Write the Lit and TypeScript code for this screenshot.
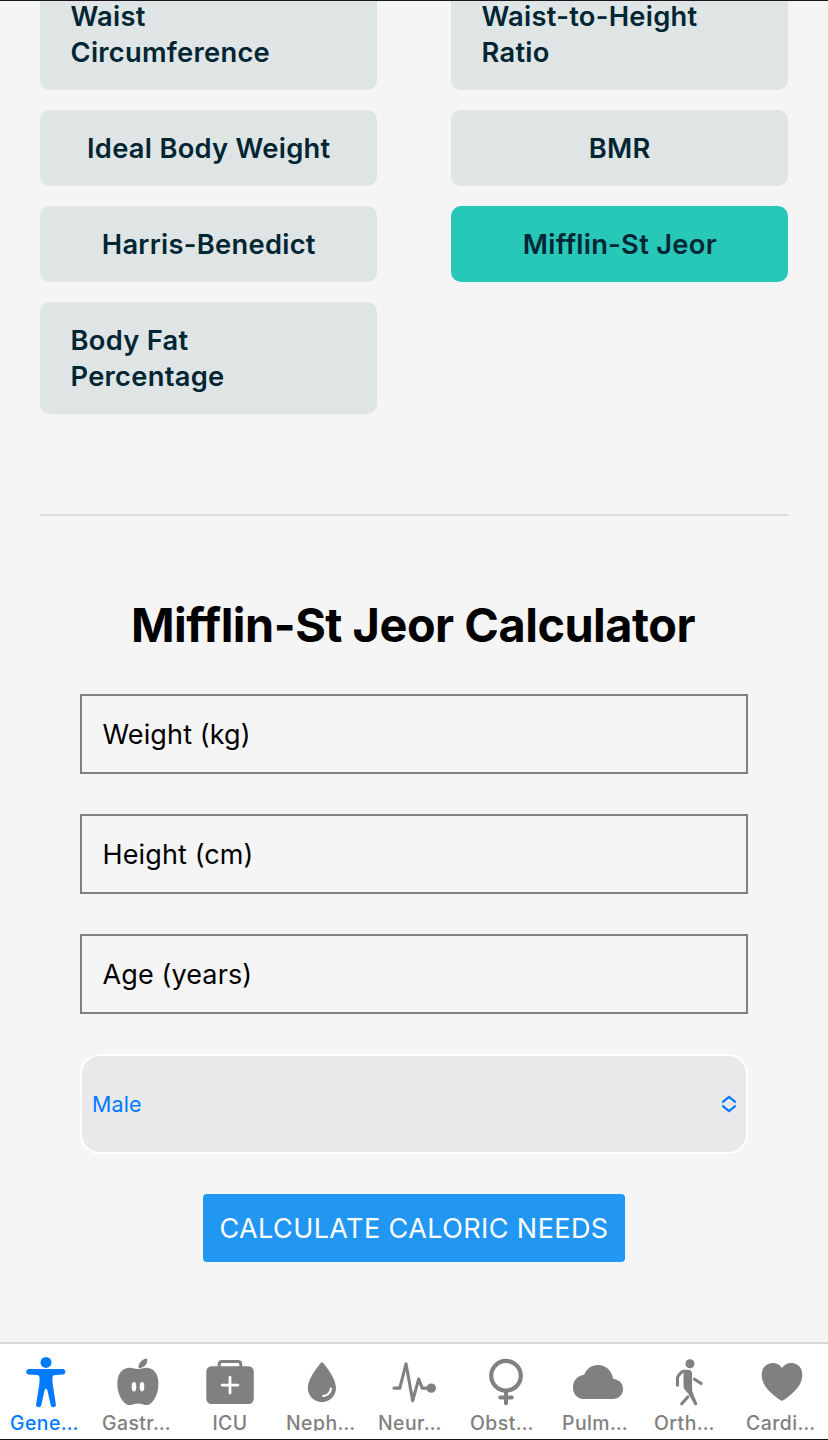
import { LitElement, html, css, svg } from "lit";
import { customElement, property } from "lit/decorators.js";
import { classMap } from "lit/directives/class-map.js";

const ICONS: Record<string, unknown> = {
  body: svg`<circle cx="30" cy="7.4" r="5.5"/><path d="M12.4 13.9H47.2A2.8 2.8 0 0 1 47.2 19.4L39 20Q36.3 20.3 36.4 23.5L36.7 29L39.8 48.9A2.6 2.6 0 0 1 34.7 50.2L31.6 36Q30 31 28.4 36L25.3 50.2A2.6 2.6 0 0 1 20.2 48.9L23.3 29L23.6 23.5Q23.7 20.3 21 20L12.4 19.4A2.8 2.8 0 0 1 12.4 13.9Z"/>`,
  apple: svg`<path fill-rule="evenodd" d="M30 14.1C26.5 14.1 25 12.7 21.3 12.8C13 13.1 9.3 20.5 9.3 28.8C9.3 36.5 12 43 16 47.3C18.8 50.3 21.8 50.6 24.7 49.5C28.7 48.1 31.3 48.1 35.3 49.5C38.2 50.6 41.2 50.3 44 47.3C48 43 50.4 36.5 50.4 28.8C50.4 20.5 47 13.1 38.7 12.8C35 12.7 33.5 14.1 30 14.1ZM26 27A2.3 4.7 0 0 0 26 36.4A2.3 4.7 0 0 0 26 27ZM34 27A2.3 4.7 0 0 0 34 36.4A2.3 4.7 0 0 0 34 27Z"/><path d="M39.2 3.6C40.2 8.5 36 13.4 30.6 13.3C29.7 8.7 34 3.9 39.2 3.6Z"/>`,
  medkit: svg`<rect x="6.3" y="11.2" width="47.5" height="37.8" rx="5.2"/><path class="line" stroke-width="3" d="M19.2 12V9.5Q19.2 6.6 22.1 6.6H37.9Q40.8 6.6 40.8 9.5V12"/><path class="cut" stroke-width="2.8" d="M30 22.2V38M22.1 30.1H37.9"/>`,
  drop: svg`<path d="M28.7 8.1Q30 6.3 31.3 8.1C36 14.3 44 24.5 44 33.1A14.1 14.1 0 0 1 15.8 33.1C15.8 24.5 24 14.3 28.7 8.1Z"/><path class="cut" stroke-width="2.1" d="M38.9 33.6A8 8 0 0 1 31.2 41"/>`,
  pulse: svg`<path class="line" stroke-width="3.1" d="M10 33.1H15.8L22 8.8L28.7 45.7L34.7 24L38.2 33.1H46"/><circle cx="47.3" cy="33.1" r="4.7"/>`,
  female: svg`<circle class="line" cx="30" cy="20.7" r="14.8" stroke-width="4.2"/><path class="line" stroke-width="4" d="M30 36V48.2M24.3 42.5H35.8"/>`,
  cloud: svg`<path d="M16.7 44C9.6 44 5 39.3 5 32.4C5 25.5 9.2 20.8 16.2 19.7C18.6 13.6 23.5 10 30 10C37.8 10 43.7 15.3 45.2 24C51.3 24.6 55 28.2 55 34C55 40 51 44 44.5 44Z"/>`,
  walk: svg`<circle cx="30" cy="8.7" r="4.5"/><path d="M23.5 19Q23.5 14.7 27.8 14.7Q32.1 14.7 32.1 19V35.5L33.7 40.3L37.1 48.1A1.5 1.5 0 0 1 34.4 49.5L28.4 38.8L24.6 34.5Q23.5 33 23.5 31Z"/><path class="line" stroke-width="3.1" d="M17.5 30.2V23.3Q17.5 21.5 18.7 20.2L21.4 17.3Q22.8 16.1 25.3 16.1M27.8 42L21.7 48.8"/><path class="line" stroke-width="3.1" d="M34.5 24.2L41.2 28.5"/>`,
  heart: svg`<path d="M30 45.7C28.8 45.7 27.7 44.9 26.6 44.1C15.4 35.6 9.7 29 9.7 19.8C9.7 13 14.3 8 20.6 8C24.7 8 27.8 9.8 30 12.9C32.2 9.8 35.3 8 39.4 8C45.7 8 50.3 13 50.3 19.8C50.3 29 44.6 35.6 33.4 44.1C32.3 44.9 31.2 45.7 30 45.7Z"/>`,
};

@customElement("tab-item")
class TabItem extends LitElement {
  @property() icon = "";
  @property() label = "";
  @property({ type: Boolean }) active = false;

  static styles = css`
    :host { display: block; flex: 1 1 0; min-width: 0; }
    .tab { display: flex; flex-direction: column; align-items: center; padding-top: 11px; color: #808080; }
    .active { color: #007aff; }
    svg { display: block; width: 60px; height: 56px; fill: currentColor; }
    .line { fill: none; stroke: currentColor; stroke-linecap: round; stroke-linejoin: round; }
    .cut { fill: none; stroke: #fff; stroke-linecap: round; }
    .label { width: 72px; height: 20px; line-height: 24px; font-size: 19.4px; font-weight: 450; letter-spacing: 0.45px; overflow: hidden; white-space: nowrap; }
    .full { text-align: center; }
  `;

  render() {
    return html`<div class=${classMap({ tab: true, active: this.active })}>
      <svg viewBox="0 0 60 56">${ICONS[this.icon]}</svg>
      <div class=${classMap({ label: true, full: !this.label.endsWith("…") })}>${this.label}</div>
    </div>`;
  }
}

@customElement("app-root")
class AppRoot extends LitElement {
  static styles = css`
    :host { display: block; font-family: Inter, "Liberation Sans", sans-serif; }
    * { box-sizing: border-box; }
    .screen { display: flex; flex-direction: column; height: 1440px; overflow: hidden; background: #f5f5f5; border-top: 1px solid #1a141c; border-bottom: 1px solid #111; }
    .content { flex: 1 1 0; min-height: 0; overflow: hidden; padding: 0 40px; }
    .choices { display: grid; grid-template-columns: 337px 337px; column-gap: 74px; row-gap: 20px; margin-top: -23px; }
    .choice { display: flex; justify-content: center; padding: 21px 30px 19px 30.5px; border-radius: 10px; background: #dfe5e5; color: #002633; font-size: 27.3px; line-height: 36px; font-weight: 600; letter-spacing: 0.28px; white-space: pre; }
    .wrapped { justify-content: flex-start; }
    .selected { background: #28c8b9; }
    .divider { height: 2px; margin-top: 100px; background: #dcdddd; }
    .form { display: flex; flex-direction: column; align-items: center; padding: 80px 40px 0; }
    .title { margin: 0; padding-right: 2px; font-size: 46.8px; line-height: 58px; font-weight: 700; color: #000; letter-spacing: -0.47px; white-space: nowrap; }
    .fields { display: flex; flex-direction: column; gap: 40px; width: 100%; margin-top: 40px; }
    .field { height: 80px; padding: 1px 20.5px 0; border: 2px solid #808080; font-size: 27px; line-height: 76px; color: #000; letter-spacing: 0.12px; }
    .select { display: flex; align-items: center; justify-content: space-between; height: 100px; padding: 0 9px 0 10px; border: 2px solid #fff; border-radius: 20px; background: #e9e9eb; color: #007aff; font-size: 21.4px; letter-spacing: 0.2px; }
    .chevrons { width: 16px; height: 18px; fill: none; stroke: currentColor; stroke-width: 2.2; }
    .submit { width: 422px; height: 68px; margin-top: 40px; border: 0; padding: 1px 0 0; border-radius: 4px; background: #2196f3; color: #fff; font: 400 27px/67px Inter, sans-serif; letter-spacing: 0.42px; text-align: center; white-space: nowrap; }
    .tabs { display: flex; height: 97px; border-top: 2px solid #d8d8d8; background: #fff; }
  `;

  private choices = [
    "Waist\nCircumference", "Waist-to-Height\nRatio", "Ideal Body Weight", "BMR",
    "Harris-Benedict", "Mifflin-St Jeor", "Body Fat\nPercentage",
  ];
  private fields = ["Weight (kg)", "Height (cm)", "Age (years)"];
  private tabs = [
    ["body", "Gene…"], ["apple", "Gastr…"], ["medkit", "ICU"], ["drop", "Neph…"], ["pulse", "Neur…"],
    ["female", "Obst…"], ["cloud", "Pulm…"], ["walk", "Orth…"], ["heart", "Cardi…"],
  ];

  render() {
    return html`<div class="screen">
      <main class="content">
        <div class="choices">
          ${this.choices.map((c) => html`<div class=${classMap({ choice: true, wrapped: c.includes("\n"), selected: c === "Mifflin-St Jeor" })}>${c}</div>`)}
        </div>
        <div class="divider"></div>
        <section class="form">
          <h1 class="title">Mifflin-St Jeor Calculator</h1>
          <div class="fields">
            ${this.fields.map((f) => html`<div class="field">${f}</div>`)}
            <div class="select"><span>Male</span>
              <svg class="chevrons" viewBox="0 0 16 18"><path d="M1.3 7.3L8 2L14.7 7.3M1.3 10.7L8 16L14.7 10.7"/></svg>
            </div>
          </div>
          <button class="submit">CALCULATE CALORIC NEEDS</button>
        </section>
      </main>
      <nav class="tabs">
        ${this.tabs.map(([icon, label], i) => html`<tab-item .icon=${icon} .label=${label} .active=${i === 0}></tab-item>`)}
      </nav>
    </div>`;
  }
}
